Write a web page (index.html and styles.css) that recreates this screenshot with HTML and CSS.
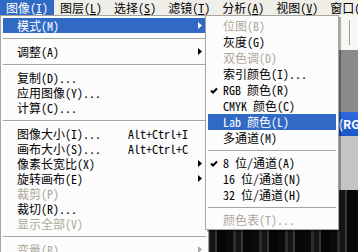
FILE: index.html
```html
<!doctype html>
<html>
<head>
<meta charset="utf-8" />
<title>图像菜单</title>
<link rel="stylesheet" href="styles.css">
</head>
<body>
<div class="app">
	<div class="menubar">
		<span class="mb-item on">图像(<u>I</u>)</span>
		<span class="mb-item">图层(<u>L</u>)</span>
		<span class="mb-item">选择(<u>S</u>)</span>
		<span class="mb-item">滤镜(<u>T</u>)</span>
		<span class="mb-item">分析(<u>A</u>)</span>
		<span class="mb-item">视图(<u>V</u>)</span>
		<span class="mb-item">窗口(<u>W</u>)</span>
	</div>
	<div class="options"><i class="grip"></i></div>
	<div class="workspace">
		<div class="doc">
			<div class="doc-title">未标题-1 @ 66.7% (RGB/8)</div>
			<div class="doc-body"></div>
			<div class="photo"></div>
		</div>
	</div>

	<!-- 图像 主菜单 -->
	<div class="menu main">
		<div class="item hot"><span>模式(M)</span><span></span><svg class="arrow" width="4" height="7"><path d="M0 0L4 3.5L0 7Z"/></svg></div>
		<div class="sep"></div>
		<div class="item"><span>调整(A)</span><span></span><svg class="arrow" width="4" height="7"><path d="M0 0L4 3.5L0 7Z"/></svg></div>
		<div class="sep"></div>
		<div class="item"><span>复制(D)...</span></div>
		<div class="item"><span>应用图像(Y)...</span></div>
		<div class="item"><span>计算(C)...</span></div>
		<div class="sep"></div>
		<div class="item"><span>图像大小(I)...</span><span class="sc">Alt+Ctrl+I</span></div>
		<div class="item"><span>画布大小(S)...</span><span class="sc">Alt+Ctrl+C</span></div>
		<div class="item"><span>像素长宽比(X)</span><span></span><svg class="arrow" width="4" height="7"><path d="M0 0L4 3.5L0 7Z"/></svg></div>
		<div class="item"><span>旋转画布(E)</span><span></span><svg class="arrow" width="4" height="7"><path d="M0 0L4 3.5L0 7Z"/></svg></div>
		<div class="item off"><span>裁剪(P)</span></div>
		<div class="item"><span>裁切(R)...</span></div>
		<div class="item off"><span>显示全部(V)</span></div>
		<div class="sep"></div>
		<div class="item off"><span>变量(B)</span><span></span><svg class="arrow" width="4" height="7"><path d="M0 0L4 3.5L0 7Z"/></svg></div>
	</div>

	<!-- 模式 子菜单 -->
	<div class="menu sub">
		<div class="item off"><i></i><span>位图(B)</span></div>
		<div class="item"><i></i><span>灰度(G)</span></div>
		<div class="item off"><i></i><span>双色调(D)</span></div>
		<div class="item"><i></i><span>索引颜色(I)...</span></div>
		<div class="item"><svg class="check" width="8" height="7"><path d="M1 3.5L3 5.5L7 1.5"/></svg><span>RGB 颜色(R)</span></div>
		<div class="item"><i></i><span>CMYK 颜色(C)</span></div>
		<div class="item hot"><i></i><span>Lab 颜色(L)</span></div>
		<div class="item"><i></i><span>多通道(M)</span></div>
		<div class="sep"></div>
		<div class="item"><svg class="check" width="8" height="7"><path d="M1 3.5L3 5.5L7 1.5"/></svg><span>8 位/通道(A)</span></div>
		<div class="item"><i></i><span>16 位/通道(N)</span></div>
		<div class="item"><i></i><span>32 位/通道(H)</span></div>
		<div class="sep"></div>
		<div class="item off"><i></i><span>颜色表(T)...</span></div>
	</div>
</div>
</body>
</html>
```

FILE: styles.css
```css
*{margin: 0;padding: 0;box-sizing: border-box;}
body{width: 358px;height: 252px;overflow: hidden;background: #8a8a8a;
	font: 12px/15px "Noto Sans Mono CJK SC","Noto Sans CJK SC",monospace;color: #000;}
.app{position: relative;height: 252px;display: flex;flex-direction: column;}

.menubar{height: 15px;background: #efeee9;display: flex;white-space: nowrap;}
.mb-item{padding: 0 6px;line-height: 15px;}
.mb-item u{text-decoration: underline;}
.mb-item.on{background: #316ac5;color: #fff;}

.options{height: 35px;background: #f7f7f4;display: flex;justify-content: flex-end;padding: 5px 7px 5px 0;}
.grip{width: 2px;border-left: 1px solid #9a9a9a;border-right: 1px solid #fff;}

.workspace{flex: 1;padding: 62px 0 0 200px;display: flex;}
.doc{flex: 1;display: flex;flex-direction: column;min-width: 0;}
.doc-title{height: 24px;background: linear-gradient(#2d68dc,#1b57cc);color: #fff;font-weight: bold;
	line-height: 24px;white-space: nowrap;overflow: hidden;padding-left: 34px;font-family: "Noto Sans CJK SC",sans-serif;}
.doc-body{height: 54px;background: #c4c4c4;}
.photo{flex: 1;background: repeating-linear-gradient(90deg,#0b0b0b 0 7px,#2c2c2c 7px 10px,#151515 10px 15px,#383838 15px 17px,#060606 17px 26px);}

.menu{position: absolute;top: 15px;background: #fcfcfc;border: 1px solid #a5a49e;padding: 2px;}
.main{left: 0;width: 209px;height: 260px;}
.sub{left: 205px;width: 134px;padding: 2px 2px 1px;box-shadow: 2px 2px 0 rgba(0,0,0,0.3);}

.item{height: 15px;line-height: 15px;white-space: nowrap;}
.main .item{display: grid;grid-template-columns: 111px 1fr 10px;padding: 0 4px 0 14px;align-items: center;}
.sub .item{height: 16px;line-height: 16px;display: grid;grid-template-columns: 15px 1fr;align-items: center;}
.item.hot{background: #316ac5;color: #fff;}
.item.off{color: #aca899;}
.arrow{justify-self: end;fill: currentColor;}
.check{margin-left: 2px;fill: none;stroke: #000;stroke-width: 2;}

.sep{height: 11px;padding-top: 5px;}
.sep:after{content: "";display: block;border-top: 1px solid #a5a49e;border-bottom: 1px solid #fff;}
.sub .sep{height: 9px;padding-top: 4px;}
```
